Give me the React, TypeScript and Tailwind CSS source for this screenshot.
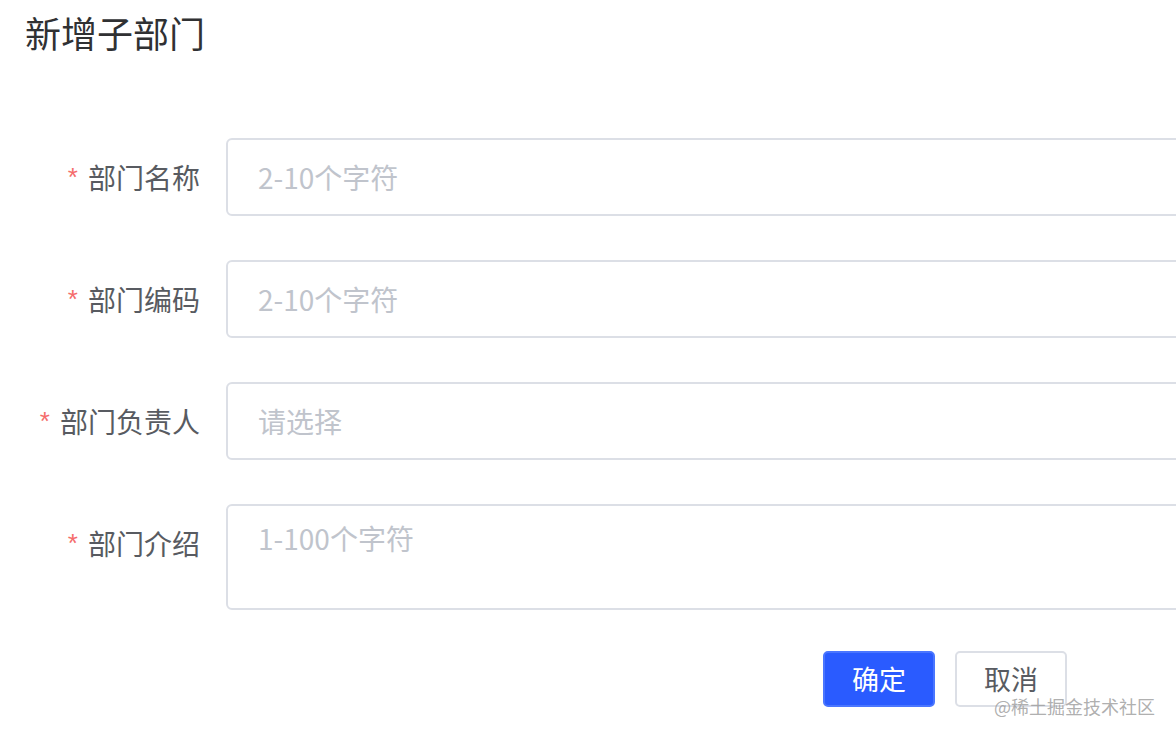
import React from "react";

const font = { fontFamily: '"Noto Sans CJK SC", "Noto Sans", sans-serif' };

function Label({ text }: { text: string }) {
  return (
    <div className="w-[226px] shrink-0 pr-[26px] flex justify-end items-center text-[28px] leading-[40px] text-[#585b61]">
      <span className="text-[#f56c6c] mr-[10px] text-[26px]" style={{ fontFamily: '"Liberation Sans", sans-serif' }}>*</span>
      <span>{text}</span>
    </div>
  );
}

export default function App() {
  const rows = [
    { label: "部门名称", ph: "2-10个字符" },
    { label: "部门编码", ph: "2-10个字符" },
    { label: "部门负责人", ph: "请选择" },
  ];
  return (
    <div className="w-[1176px] h-[737px] overflow-hidden bg-white relative" style={font}>
      <h1 className="pl-[25px] pt-[10px] text-[36px] leading-[44px] text-[#303133] font-normal">新增子部门</h1>
      <div className="mt-[84px] flex flex-col">
        {rows.map((r) => (
          <div key={r.label} className="flex items-center mb-[44px]">
            <Label text={r.label} />
            <div className="w-[1000px] shrink-0 h-[78px] border-2 border-[#dcdfe6] rounded-[6px] flex items-center pl-[30px] text-[28px] text-[#c0c4cc]">
              {r.ph}
            </div>
          </div>
        ))}
        <div className="flex items-start">
          <div className="h-[78px] flex items-center">
            <Label text="部门介绍" />
          </div>
          <div className="w-[1000px] shrink-0 h-[106px] border-2 border-[#dcdfe6] rounded-[6px] pl-[30px] pt-[12px] text-[28px] leading-[40px] text-[#c0c4cc]">
            1-100个字符
          </div>
        </div>
        <div className="flex justify-end pr-[109px] mt-[41px] gap-[20px]">
          <div className="w-[112px] h-[56px] rounded-[5px] bg-[#2a5bff] border-2 border-[#4a76ff] flex items-center justify-center text-white text-[27px]">
            确定
          </div>
          <div className="w-[112px] h-[56px] rounded-[5px] bg-white border-2 border-[#dcdfe6] flex items-center justify-center text-[#585b61] text-[27px]">
            取消
          </div>
        </div>
      </div>
      <div className="absolute left-[994px] top-[693px] text-[18px] leading-[26px] text-[#9a9a9a]/80">@稀土掘金技术社区</div>
    </div>
  );
}
